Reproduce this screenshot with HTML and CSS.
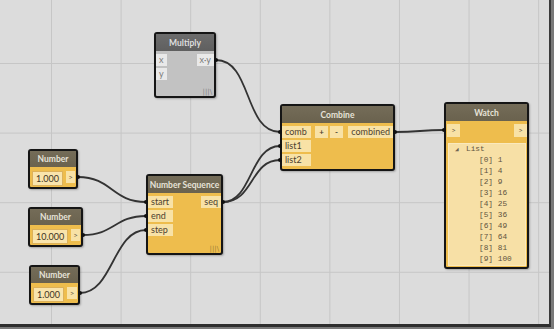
FILE: index.html
```html
<!DOCTYPE html>
<html lang="en">
<head>
    <meta charset="UTF-8">
    <title>Dynamo graph</title>
    <link rel="stylesheet" href="styles.css">
</head>
<body>

<div class="canvas">

    <div class="node gray n-multiply">
        <div class="node-head">Multiply</div>
        <div class="node-body">
            <div class="ports-in">
                <span class="port">x</span>
                <span class="port">y</span>
            </div>
            <div class="ports-out">
                <span class="port">x·y</span>
            </div>
        </div>
        <div class="lacing">|||\</div>
    </div>

    <div class="node n-combine">
        <div class="node-head">Combine</div>
        <div class="node-body">
            <div class="ports-in wide">
                <span class="port">comb</span>
                <span class="port">list1</span>
                <span class="port">list2</span>
            </div>
            <div class="buttons">
                <span class="btn">+</span>
                <span class="btn">-</span>
            </div>
            <div class="ports-out">
                <span class="port">combined</span>
            </div>
        </div>
    </div>

    <div class="node n-watch">
        <div class="node-head">Watch</div>
        <div class="watch-row">
            <span class="arrow">&gt;</span>
            <span class="arrow">&gt;</span>
        </div>
        <div class="watch-list">
            <div class="tree"><span class="tri">◢</span>List</div>
            <div class="item">[0] 1</div>
            <div class="item">[1] 4</div>
            <div class="item">[2] 9</div>
            <div class="item">[3] 16</div>
            <div class="item">[4] 25</div>
            <div class="item">[5] 36</div>
            <div class="item">[6] 49</div>
            <div class="item">[7] 64</div>
            <div class="item">[8] 81</div>
            <div class="item">[9] 100</div>
        </div>
    </div>

    <div class="node number n-num1">
        <div class="node-head">Number</div>
        <div class="num-body">
            <span class="num-value">1.000</span>
            <span class="arrow">&gt;</span>
        </div>
    </div>

    <div class="node number n-num2">
        <div class="node-head">Number</div>
        <div class="num-body">
            <span class="num-value">10.000</span>
            <span class="arrow">&gt;</span>
        </div>
    </div>

    <div class="node number n-num3">
        <div class="node-head">Number</div>
        <div class="num-body">
            <span class="num-value">1.000</span>
            <span class="arrow">&gt;</span>
        </div>
    </div>

    <div class="node n-sequence">
        <div class="node-head">Number Sequence</div>
        <div class="node-body">
            <div class="ports-in">
                <span class="port">start</span>
                <span class="port">end</span>
                <span class="port">step</span>
            </div>
            <div class="ports-out">
                <span class="port">seq</span>
            </div>
        </div>
        <div class="lacing">|||\</div>
    </div>

    <!-- connectors -->
    <svg class="wires" width="554" height="329" viewBox="0 0 554 329">
        <g fill="none" stroke="#333" stroke-width="1.8">
            <path d="M216,60 C252,60 244,132 280,132"/>
            <path d="M395,132 C420,132 420,130 444,130"/>
            <path d="M223,202 C252,202 250,146 280,146"/>
            <path d="M223,202 C254,202 250,160 280,160"/>
            <path d="M78,177 C112,177 112,202 146,202"/>
            <path d="M83,235 C114,235 115,216 146,216"/>
            <path d="M80,293 C113,293 113,230 146,230"/>
        </g>
        <g fill="#111">
            <circle cx="216" cy="60" r="2"/>
            <circle cx="280" cy="132" r="2"/>
            <circle cx="280" cy="146" r="2"/>
            <circle cx="280" cy="160" r="2"/>
            <circle cx="395" cy="132" r="2"/>
            <circle cx="444" cy="130" r="2"/>
            <circle cx="223" cy="202" r="2"/>
            <circle cx="146" cy="202" r="2"/>
            <circle cx="146" cy="216" r="2"/>
            <circle cx="146" cy="230" r="2"/>
            <circle cx="78" cy="177" r="2"/>
            <circle cx="83" cy="235" r="2"/>
            <circle cx="80" cy="293" r="2"/>
        </g>
    </svg>

</div>

</body>
</html>
```

FILE: styles.css
```css
body {
    margin: 0;
    width: 554px;
    height: 329px;
    overflow: hidden;
    background-color: #7a7a7a;
    font-family: Lato, "Open Sans", sans-serif;
}

.canvas {
    position: relative;
    width: 549px;
    height: 324px;
    border-right: 2px solid #3a3a3a;
    border-bottom: 3px solid #2e2e2e;
    background-color: #dcdcdc;
    background-image:
        linear-gradient(to right, #c6c6c6 1px, transparent 1px),
        linear-gradient(to bottom, #c6c6c6 1px, transparent 1px);
    background-size: 69.6px 69.6px;
    background-position: 51px 63px;
}

.wires {
    position: absolute;
    left: 0;
    top: 0;
    pointer-events: none;
}

/* nodes */

.node {
    position: absolute;
    box-sizing: border-box;
    display: flex;
    flex-direction: column;
    border: 2px solid #151515;
    border-radius: 3px;
    background-color: #eebd4d;
    box-shadow: 1px 1px 2px rgba(0, 0, 0, 0.25);
}

.node-head {
    height: 17px;
    display: flex;
    align-items: center;
    justify-content: center;
    background: linear-gradient(#746c58, #6a624e);
    color: #e6e2d8;
    font-size: 8.5px;
    font-weight: bold;
    white-space: nowrap;
}

.node-body {
    display: flex;
    align-items: flex-start;
    padding-top: 3px;
}

.ports-in,
.ports-out {
    display: flex;
    flex-direction: column;
    gap: 2px;
}

.ports-out {
    margin-left: auto;
}

.port {
    height: 12px;
    line-height: 12px;
    padding: 0 3px;
    background-color: #f8e2a6;
    color: #4d4130;
    font-size: 9px;
    white-space: nowrap;
}

.ports-in .port {
    padding-right: 5px;
}

.buttons {
    display: flex;
    gap: 2px;
    margin-left: 4px;
}

.btn {
    width: 13px;
    height: 12px;
    line-height: 12px;
    text-align: center;
    background-color: #f8e2a6;
    color: #4d4130;
    font-size: 8px;
    font-weight: bold;
}

.lacing {
    margin-top: auto;
    padding: 0 2px 0 0;
    text-align: right;
    font-family: "DejaVu Serif", serif;
    font-size: 7px;
    line-height: 8px;
    color: #9c7f38;
}

.arrow {
    width: 13px;
    height: 12px;
    line-height: 12px;
    text-align: center;
    background-color: #f8e2a6;
    color: #6a5d45;
    font-size: 8px;
}

/* multiply (gray) */

.node.gray {
    background-color: #c2c2c2;
}

.gray .node-head {
    background: linear-gradient(#6c6c6c, #5f5f5f);
    color: #dedede;
}

.gray .port {
    background-color: #e9e9e9;
    color: #7a7a7a;
}

.gray .ports-in .port {
    padding-right: 3px;
}

.gray .lacing {
    color: #808080;
}

.n-multiply {
    left: 154px;
    top: 32px;
    width: 62px;
    height: 66px;
}

/* combine */

.n-combine {
    left: 280px;
    top: 104px;
    width: 115px;
    height: 67px;
}

.n-combine .ports-in {
    width: 29px;
}

/* number sequence */

.n-sequence {
    left: 146px;
    top: 174px;
    width: 77px;
    height: 81px;
}

.n-sequence .ports-in {
    width: 25px;
}

/* number inputs */

.number .node-head {
    height: 16px;
}

.num-body {
    display: flex;
    align-items: flex-start;
    gap: 3px;
    padding: 4px 1px 1px 2px;
}

.num-value {
    flex: 1;
    box-sizing: border-box;
    height: 15px;
    line-height: 13px;
    padding: 0 3px;
    border: 1px solid #dcb15a;
    background-color: #f9e4ac;
    color: #3e3424;
    font-size: 9px;
}

.n-num1 {
    left: 28px;
    top: 149px;
    width: 50px;
    height: 40px;
}

.n-num2 {
    left: 28px;
    top: 207px;
    width: 55px;
    height: 40px;
}

.n-num3 {
    left: 29px;
    top: 265px;
    width: 51px;
    height: 40px;
}

/* watch */

.n-watch {
    left: 444px;
    top: 102px;
    width: 85px;
    height: 167px;
}

.watch-row {
    display: flex;
    justify-content: space-between;
    padding: 3px 0 0 1px;
}

.watch-row .arrow {
    height: 13px;
    line-height: 13px;
}

.watch-list {
    flex: 1;
    margin: 6px 1px 1px 2px;
    padding: 0 0 0 6px;
    background-color: #f7e0a6;
    border: 1px solid #fae9bd;
    font-family: "Liberation Mono", "DejaVu Sans Mono", monospace;
    font-size: 7.8px;
    line-height: 11px;
    color: #5f5440;
}

.tri {
    display: inline-block;
    width: 11px;
    font-size: 6px;
    color: #6f6350;
}

.item {
    padding-left: 24px;
}
```
